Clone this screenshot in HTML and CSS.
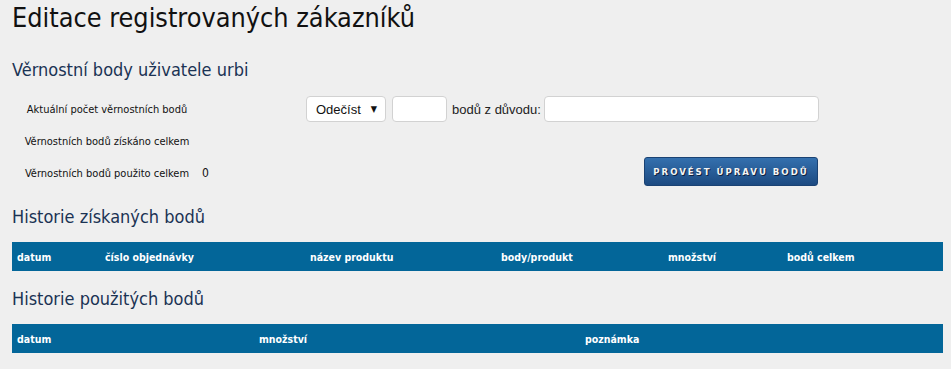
FILE: index.html
```
<!DOCTYPE html>
<html lang="cs">

<head>
    <meta charset="UTF-8">
    <meta name="viewport" content="width=device-width, initial-scale=1.0">
    <title>Editace registrovaných zákazníků</title>
    <link rel="stylesheet" href="styles.css">
</head>

<body>
    <div id="page">
        <h1 class="page-title">Editace registrovaných zákazníků</h1>

        <h2 class="section-title">Věrnostní body uživatele urbi</h2>

        <div class="points-form">
            <div class="label">Aktuální počet věrnostních bodů</div>
            <div class="value"></div>
            <div class="controls">
                <div class="select-wrap">
                    <select class="field select">
                        <option>Odečíst</option>
                        <option>Přičíst</option>
                    </select>
                </div>
                <input type="text" class="field small">
                <span class="reason">bodů z důvodu:</span>
                <input type="text" class="field wide">
            </div>

            <div class="label">Věrnostních bodů získáno celkem</div>
            <div class="value"></div>
            <div class="controls"></div>

            <div class="label">Věrnostních bodů použito celkem</div>
            <div class="value">0</div>
            <div class="controls right">
                <button class="btn-submit">Provést úpravu bodů</button>
            </div>
        </div>

        <h2 class="section-title history">Historie získaných bodů</h2>
        <div class="table-head earned">
            <div>datum</div>
            <div>číslo objednávky</div>
            <div>název produktu</div>
            <div>body/produkt</div>
            <div>množství</div>
            <div>bodů celkem</div>
        </div>

        <h2 class="section-title history">Historie použitých bodů</h2>
        <div class="table-head used">
            <div>datum</div>
            <div>množství</div>
            <div>poznámka</div>
        </div>
    </div>
</body>

</html>
```

FILE: styles.css
```
* {
    margin: 0;
    padding: 0;
    box-sizing: border-box;
}

body {
    background-color: #efefef;
    font-family: "DejaVu Sans Condensed", "DejaVu Sans", sans-serif;
    color: #111;
}

#page {
    width: 931px;
    margin-left: 12px;
}

/* --------  HEADINGS ------------------- */
.page-title {
    font-weight: normal;
    font-size: 26.8px;
    line-height: 34px;
    padding-top: 1px;
    color: #111;
}

.section-title {
    font-weight: normal;
    font-size: 18px;
    line-height: 22px;
    margin-top: 24px;
    color: #1b3354;
}

.section-title.history {
    margin-top: 17px;
}

/* --------  FORM ------------------- */
.points-form {
    display: grid;
    grid-template-columns: 190px 104px 512px;
    grid-auto-rows: 32px;
    margin-top: 12px;
    font-size: 11px;
    align-items: center;
}

.label {
    text-align: center;
}

.value {
    font-size: 12px;
}

.controls {
    display: flex;
    align-items: center;
    white-space: nowrap;
}

.controls.right {
    justify-content: flex-end;
    align-self: start;
}

.field {
    flex-shrink: 0;
    height: 26px;
    background-color: #fff;
    border: 1px solid #d2d2d2;
    border-radius: 4px;
    font-family: "Liberation Sans", Arial, sans-serif;
    font-size: 13px;
    color: #111;
}

.select-wrap {
    position: relative;
    margin-right: 6px;
}

.select-wrap::after {
    content: "\25BC";
    position: absolute;
    right: 9px;
    top: 8px;
    font-size: 9px;
    color: #111;
    pointer-events: none;
}

.select {
    display: block;
    width: 80px;
    padding-left: 9px;
    appearance: none;
    -webkit-appearance: none;
}

.small {
    width: 55px;
}

.wide {
    width: 275px;
}

.reason {
    font-family: "Liberation Sans", Arial, sans-serif;
    font-size: 13px;
    color: #222;
    margin: 0 3px 0 5px;
}

.btn-submit {
    width: 174px;
    height: 29px;
    background: linear-gradient(#3470ae, #1c4a81);
    border: 1px solid #1a4273;
    border-radius: 3px;
    color: #f4f4f4;
    font-family: "DejaVu Sans Condensed", "DejaVu Sans", sans-serif;
    font-weight: bold;
    font-size: 9.5px;
    letter-spacing: 2px;
    white-space: nowrap;
    text-transform: uppercase;
    text-shadow: 1px 1px 0 #0e2240;
    cursor: pointer;
}

/* --------  TABLES ------------------- */
.table-head {
    display: grid;
    height: 29px;
    margin-top: 14px;
    align-items: center;
    background-color: #036699;
    color: #fff;
    font-size: 10.5px;
    font-weight: bold;
}

.table-head div {
    padding-left: 5px;
}

.table-head.earned {
    grid-template-columns: 88px 205px 191px 167px 119px 161px;
}

.table-head.used {
    grid-template-columns: 242px 326px 363px;
}
```
